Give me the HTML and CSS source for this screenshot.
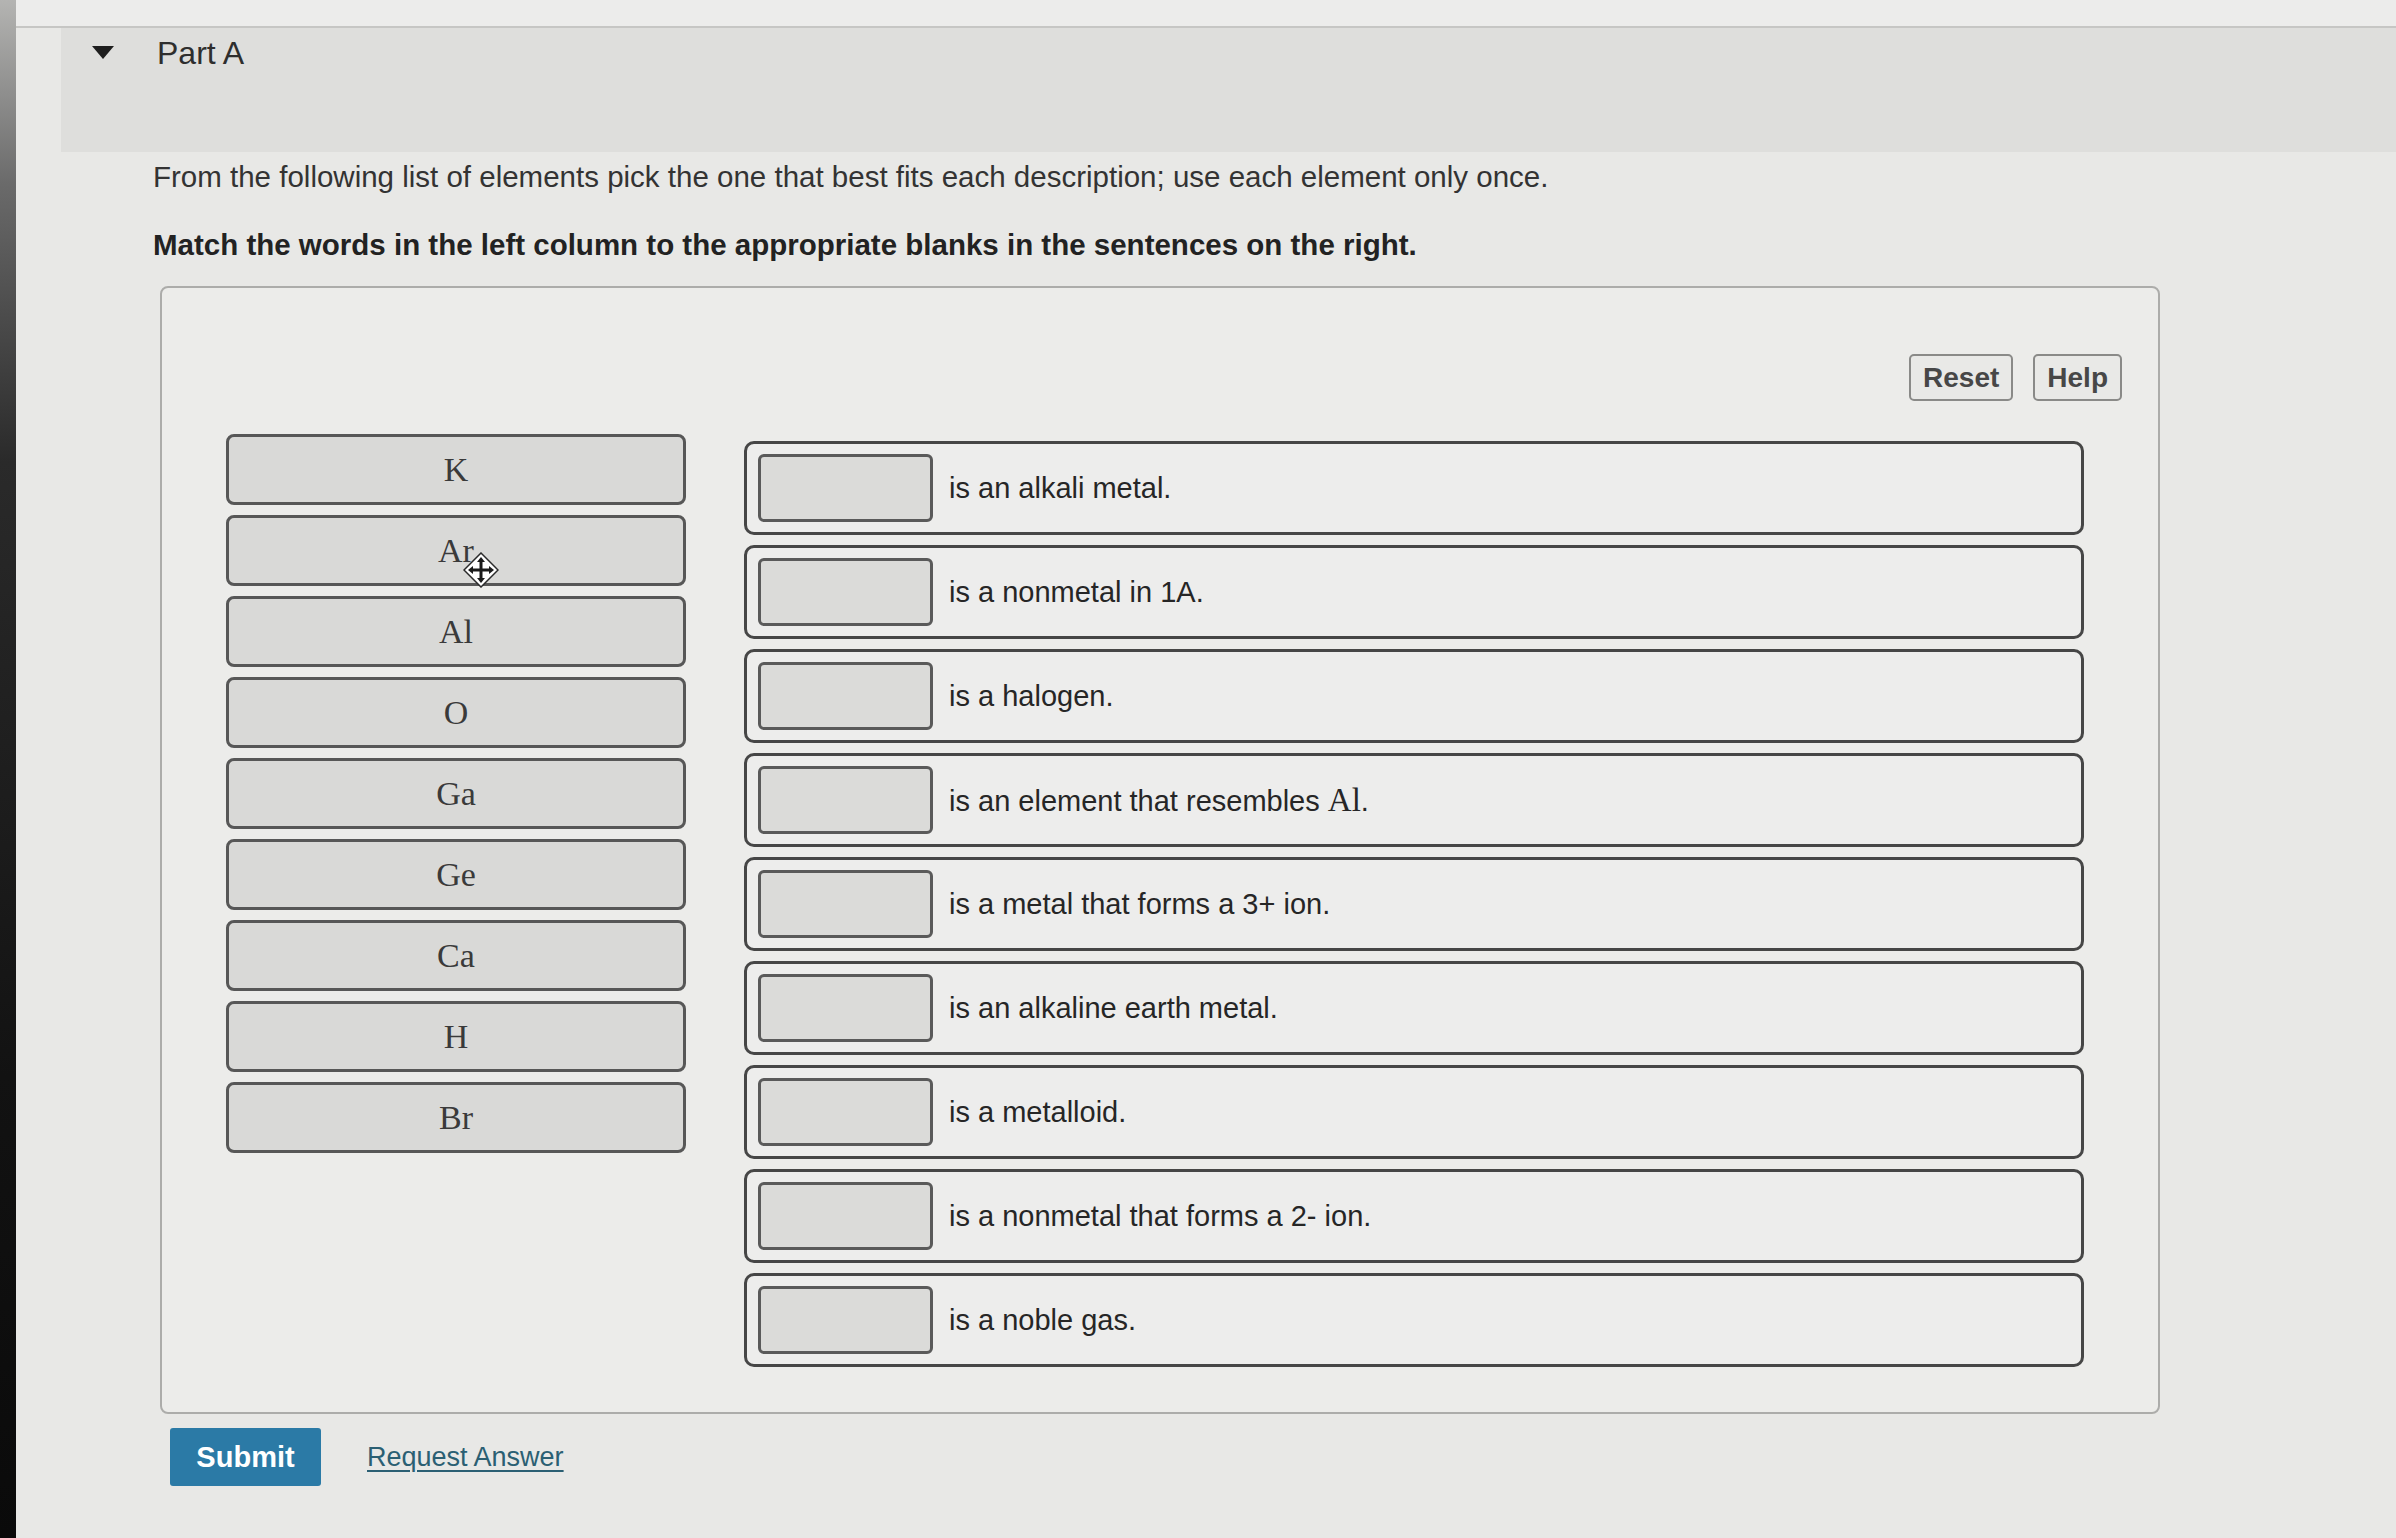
FILE: index.html
```html
<!DOCTYPE html>
<html lang="en">
<head>
<meta charset="utf-8">
<title>Part A</title>
<link rel="stylesheet" href="styles.css">
</head>
<body>
<div class="bezel"></div>
<div class="page">
  <div class="topline"></div>
  <div class="part-header">
    <span class="caret"></span>
    <span class="part-title">Part A</span>
  </div>
  <div class="instructions">
    <p class="intro">From the following list of elements pick the one that best fits each description; use each element only once.</p>
    <p class="task">Match the words in the left column to the appropriate blanks in the sentences on the right.</p>
  </div>
  <div class="box">
    <div class="toolbar">
      <button class="tool-btn">Reset</button>
      <button class="tool-btn">Help</button>
    </div>
    <div class="board">
      <div class="items">
        <div class="item">K</div>
        <div class="item">Ar
          <svg class="cursor" viewBox="0 0 36 36" width="36" height="36" aria-hidden="true">
            <polygon points="18,1 35,18 18,35 1,18" fill="#ffffff" stroke="#2a2a2a" stroke-width="1.5"/>
            <path d="M18 8 V28 M8 18 H28" stroke="#1a1a1a" stroke-width="3" fill="none"/>
            <polygon points="18,5 14,10 22,10" fill="#1a1a1a"/>
            <polygon points="18,31 14,26 22,26" fill="#1a1a1a"/>
            <polygon points="5,18 10,14 10,22" fill="#1a1a1a"/>
            <polygon points="31,18 26,14 26,22" fill="#1a1a1a"/>
          </svg>
        </div>
        <div class="item">Al</div>
        <div class="item">O</div>
        <div class="item">Ga</div>
        <div class="item">Ge</div>
        <div class="item">Ca</div>
        <div class="item">H</div>
        <div class="item">Br</div>
      </div>
      <div class="rows">
        <div class="row"><span class="blank"></span><span class="sentence">is an alkali metal.</span></div>
        <div class="row"><span class="blank"></span><span class="sentence">is a nonmetal in 1A.</span></div>
        <div class="row"><span class="blank"></span><span class="sentence">is a halogen.</span></div>
        <div class="row"><span class="blank"></span><span class="sentence">is an element that resembles <span class="sym">Al</span>.</span></div>
        <div class="row"><span class="blank"></span><span class="sentence">is a metal that forms a 3+ ion.</span></div>
        <div class="row"><span class="blank"></span><span class="sentence">is an alkaline earth metal.</span></div>
        <div class="row"><span class="blank"></span><span class="sentence">is a metalloid.</span></div>
        <div class="row"><span class="blank"></span><span class="sentence">is a nonmetal that forms a 2- ion.</span></div>
        <div class="row"><span class="blank"></span><span class="sentence">is a noble gas.</span></div>
      </div>
    </div>
  </div>
  <div class="actions">
    <button class="submit">Submit</button>
    <a class="request" href="#">Request Answer</a>
  </div>
</div>
</body>
</html>
```

FILE: styles.css
```css
html, body {
  margin: 0;
  padding: 0;
}

body {
  width: 2396px;
  height: 1538px;
  overflow: hidden;
  display: flex;
  background: #e8e8e6;
  font-family: "Liberation Sans", Arial, sans-serif;
  color: #2a2a2a;
}

.bezel {
  width: 16px;
  flex: 0 0 16px;
  background: linear-gradient(to bottom, #b4b4b2 0%, #6a6a6a 12%, #2a2a2a 30%, #121212 70%, #0a0a0a 100%);
}

.page {
  flex: 1;
  display: flex;
  flex-direction: column;
}

.topline {
  height: 26px;
  flex: 0 0 26px;
  background: #ececeb;
  border-bottom: 2px solid #c6c6c4;
}

.part-header {
  margin-left: 45px;
  height: 124px;
  flex: 0 0 124px;
  background: #dededc;
  display: flex;
  align-items: flex-start;
  padding: 5px 0 0 31px;
  box-sizing: border-box;
}

.caret {
  width: 0;
  height: 0;
  margin-top: 13px;
  border-left: 11px solid transparent;
  border-right: 11px solid transparent;
  border-top: 13px solid #1e1e1e;
}

.part-title {
  margin-left: 43px;
  font-size: 32px;
  line-height: 40px;
  color: #2e2e2e;
}

.instructions {
  padding-left: 137px;
  margin-top: 6px;
}

.instructions p {
  margin: 0;
  font-size: 29.5px;
  line-height: 38px;
}

.intro {
  color: #333333;
}

.task {
  margin-top: 30px !important;
  font-weight: bold;
  color: #222222;
}

.box {
  margin-left: 144px;
  margin-top: 22px;
  width: 2000px;
  height: 1128px;
  box-sizing: border-box;
  border: 2px solid #acacaa;
  border-radius: 8px;
  background: #ececea;
  padding: 66px 36px 0 64px;
}

.toolbar {
  display: flex;
  justify-content: flex-end;
  gap: 20px;
  height: 46px;
}

.tool-btn {
  font-family: "Liberation Sans", Arial, sans-serif;
  font-weight: bold;
  font-size: 28px;
  color: #474747;
  background: #e9e9e7;
  border: 2px solid #8a8a88;
  border-radius: 5px;
  padding: 0 12px;
  height: 47px;
}

.board {
  display: flex;
  gap: 58px;
  margin-top: 34px;
}

.items {
  width: 460px;
  display: flex;
  flex-direction: column;
  gap: 10px;
}

.item {
  position: relative;
  height: 71px;
  box-sizing: border-box;
  border: 3px solid #575757;
  border-radius: 8px;
  background: #d9d9d7;
  display: flex;
  align-items: center;
  justify-content: center;
  font-family: "Liberation Serif", "Times New Roman", serif;
  font-size: 34px;
  color: #3a3a3a;
}

.cursor {
  position: absolute;
  left: 234px;
  top: 34px;
}

.rows {
  flex: 1;
  margin-top: 7px;
  display: flex;
  flex-direction: column;
  gap: 10px;
  padding-right: 38px;
}

.row {
  height: 94px;
  box-sizing: border-box;
  border: 3px solid #464646;
  border-radius: 10px;
  background: #ededec;
  display: flex;
  align-items: center;
  padding-left: 11px;
}

.blank {
  width: 175px;
  height: 68px;
  box-sizing: border-box;
  border: 3px solid #5a5a5a;
  border-radius: 6px;
  background: #dbdbd9;
  flex: 0 0 auto;
}

.sentence {
  margin-left: 16px;
  font-size: 29px;
  color: #262626;
}

.sym {
  font-family: "Liberation Serif", "Times New Roman", serif;
  font-size: 33px;
}

.actions {
  display: flex;
  align-items: center;
  margin-left: 154px;
  margin-top: 14px;
  gap: 46px;
}

.submit {
  width: 151px;
  height: 58px;
  background: #2b7aa6;
  color: #ffffff;
  border: none;
  border-radius: 3px;
  font-family: "Liberation Sans", Arial, sans-serif;
  font-weight: bold;
  font-size: 29px;
}

.request {
  font-size: 27px;
  color: #2b5f73;
  text-decoration: underline;
  text-underline-offset: 4px;
}
```
